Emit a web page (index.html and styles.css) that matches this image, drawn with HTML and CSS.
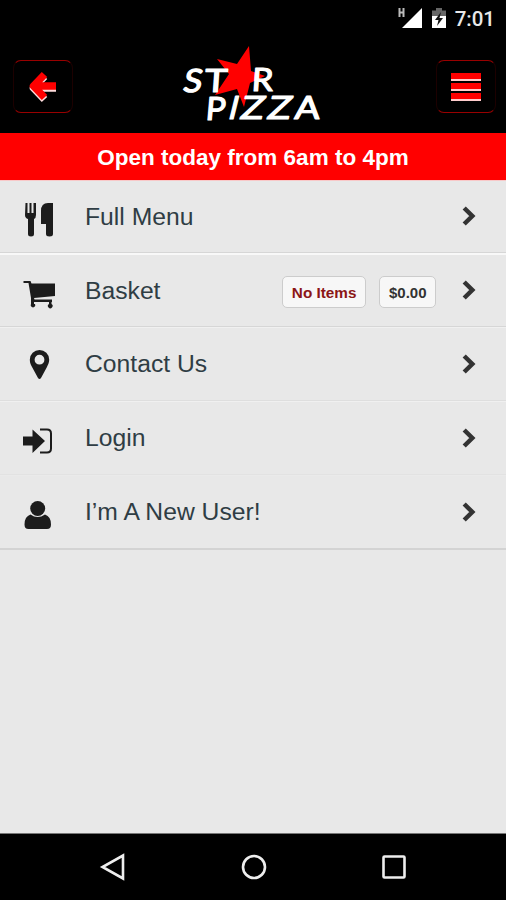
FILE: index.html
```html
<!DOCTYPE html>
<html lang="en">
<head>
<meta charset="utf-8">
<title>Star Pizza</title>
<link rel="stylesheet" href="styles.css">
</head>
<body>
<div class="status">
  <svg width="28" height="24" viewBox="0 0 28 24"><path d="M2.500 3v9M6.500 3v9M2.500 7.500h4" stroke="#bbb" stroke-width="2" fill="none"/><path d="M25 3v20H5z" fill="#fff"/></svg>
  <svg width="14" height="20" viewBox="0 0 14 20"><path d="M0 2.500h4V0h6v2.500h4V9H0z" fill="#666"/><path d="M0 8h14v12H0z" fill="#fff"/><path d="M9 4l-6 8h3.500L5 18l6-8H7.500z" fill="#111"/></svg>
  <span class="clock">7:01</span>
</div>
<header class="header">
  <button class="btn" aria-label="Back"><svg width="34" height="36" viewBox="0 0 34 36"><g fill="none" stroke-width="7.500" stroke-linejoin="round"><path d="M18.500 5.500L7.500 17l11 11.500M8 17h22" transform="translate(0 2)" stroke="#fdd"/><path d="M18.500 5.500L7.500 17l11 11.500M8 17h22" stroke="#f00"/></g></svg></button>
  <svg class="logo" width="144" height="80" viewBox="180 45 144 80">
    <path d="M249 46L251 71L265 76L250 83L244 107L237 89L215 95L229 74L217 59L237 64Z" fill="#f00"/>
    <g class="brand">
      <text transform="translate(182 92) skewX(-10) scale(1.080 1)">S</text>
      <text transform="translate(204 92) skewX(-4) scale(1.200 1)">T</text>
      <text transform="translate(251 91) skewX(-4) scale(1.080 1)">R</text>
      <text transform="translate(205 120) skewX(-5) scale(1.030 1)">P</text>
      <text transform="translate(227 119) skewX(-14)">I</text>
      <text transform="translate(239 119) skewX(-12) scale(1.220 1)">Z</text>
      <text transform="translate(266 119) skewX(-12) scale(1.220 1)">Z</text>
      <text transform="translate(294 119) skewX(-5) scale(1.160 1)">A</text>
    </g>
  </svg>
  <button class="btn" aria-label="Menu"><span class="bars"><i></i><i></i><i></i></span></button>
</header>
<div class="hours">Open today from 6am to 4pm</div>
<main class="menu">
  <a class="row">
    <svg class="icon" viewBox="0 0 32 36"><path d="M2.500 1h2v10h2V1h2v10h2V1H13v12q0 3-2 4v15q0 2.500-3 2.500T5 32V17q-3-1-3-4zM30 1v31q0 2.500-3.500 2.500T23 32V22h-5V9q0-8 7-8z"/></svg>
    <span class="label">Full Menu</span><svg class="chev" viewBox="0 0 14 20"><path d="M2.200 2L10.300 10L2.200 18"/></svg>
  </a>
  <a class="row">
    <svg class="icon" viewBox="0 0 32 36"><path d="M.5 5h7l1 2.500H32V20L11 22l.5 1.500H29V26H11v2h1a2.300 2.300 0 1 1-4 0v-6L5.500 7h-5zM26 25h2.500v3a2.300 2.300 0 1 1-2.500 0z"/></svg>
    <span class="label">Basket</span><span class="tag red">No Items</span><span class="tag">$0.00</span><svg class="chev" viewBox="0 0 14 20"><path d="M2.200 2L10.300 10L2.200 18"/></svg>
  </a>
  <a class="row">
    <svg class="icon" viewBox="0 0 32 36"><path fill-rule="evenodd" d="M16.500 1a9.700 9.700 0 0 1 9.700 9.700c0 3-1.200 5-2.500 7.800L18 29q-1.500 2-3 0L9.300 18.500C8 16 6.800 14 6.800 10.700A9.700 9.700 0 0 1 16.500 1zm0 4.800a4.900 4.900 0 1 0 0 9.800a4.900 4.900 0 0 0 0-9.800z"/></svg>
    <span class="label">Contact Us</span><svg class="chev" viewBox="0 0 14 20"><path d="M2.200 2L10.300 10L2.200 18"/></svg>
  </a>
  <a class="row">
    <svg class="icon" viewBox="0 0 32 36"><path d="M0 13.500h9.500V6.500L22 18L9.500 30V22.500H0z"/><path class="door" d="M17 6.500h7q4 0 4 4v15q0 4-4 4h-7"/></svg>
    <span class="label">Login</span><svg class="chev" viewBox="0 0 14 20"><path d="M2.200 2L10.300 10L2.200 18"/></svg>
  </a>
  <a class="row">
    <svg class="icon" viewBox="0 0 32 36"><circle cx="14.700" cy="11.500" r="7.500"/><path d="M7.500 17.500q7 5 14.500 0q6 2 6 10q0 4.500-4 4.500H5.500q-4 0-4-4.500q0-8 6-10z"/></svg>
    <span class="label">I’m A New User!</span><svg class="chev" viewBox="0 0 14 20"><path d="M2.200 2L10.300 10L2.200 18"/></svg>
  </a>
</main>
<nav class="nav">
  <svg viewBox="0 0 30 30"><path d="M25 3.500v23L4.500 15z"/></svg>
  <svg viewBox="0 0 30 30"><circle cx="15" cy="15" r="11"/></svg>
  <svg viewBox="0 0 30 30"><rect x="4.500" y="4.500" width="21" height="21" rx="1"/></svg>
</nav>
</body>
</html>
```
FILE: styles.css
```css
* { box-sizing: border-box; }
body {
  margin: 0;
  height: 900px;
  display: flex;
  flex-direction: column;
  background: #e8e8e8;
  font-family: "Liberation Sans", Arial, sans-serif;
  overflow: hidden;
}
.status {
  height: 40px;
  flex: none;
  background: #000;
  display: flex;
  justify-content: flex-end;
  align-items: flex-start;
  padding: 5px 11px 0 0;
}
.status svg:nth-child(2) { margin: 3px 9px 0 7px; }
.clock {
  color: #e8e8e8;
  font: 500 20.5px/28px Roboto, sans-serif;
}
.header {
  height: 93px;
  flex: none;
  background: #000;
  display: flex;
  justify-content: space-between;
  padding: 20px 10px 0 13px;
}
.btn {
  width: 60px;
  height: 53px;
  padding: 0;
  background: #000;
  border: 1px solid #1c0000;
  border-top-color: #900;
  border-bottom-color: #900;
  border-radius: 8px;
  display: flex;
  align-items: center;
  justify-content: center;
}
.btn svg { width: 34px; height: 36px; }
.logo { margin: -15px 5px 0 0; overflow: visible; }
.brand {
  fill: #fff;
  font: 400 32px Lato, sans-serif;
  stroke: #fff;
  stroke-width: 1.2px;
  stroke-linejoin: round;
}
.bars { display: grid; gap: 2px; }
.bars i {
  width: 30px;
  height: 8px;
  background: #f00;
  border-bottom: 2px solid #fcc;
}
.hours {
  height: 48px;
  flex: none;
  background: #f00;
  border-bottom: 1px solid #f8c8c8;
  color: #fff;
  text-align: center;
  font-weight: bold;
  font-size: 22.5px;
  line-height: 49px;
}
.menu { flex: 1; }
.row {
  height: 74px;
  display: flex;
  align-items: center;
  padding: 0 30px 0 23px;
  border-top: 1px solid #f0f0f0;
  border-bottom: 1px solid #d6d6d6;
}
.row:first-child { height: 72px; border-top: 0; }
.row:nth-child(2) { border-top: 2px solid #f8f8f8; }
.row:nth-child(3) { border-bottom-color: #dedede; }
.row:nth-child(4) { border-bottom-color: #e2e2e2; }
.row:last-child { height: 75px; border-top-color: #eaeaea; border-bottom: 2px solid #d3d3d3; }
.icon {
  width: 32px;
  height: 36px;
  margin-top: 6px;
  fill: #1c1c1c;
}
.door { fill: none; stroke: #1c1c1c; stroke-width: 2; }
.label {
  flex: 1;
  margin-left: 30px;
  color: #2f3d44;
  font-size: 24.7px;
  white-space: nowrap;
}
.chev { width: 14px; height: 20px; margin-left: 26px; }
.row:nth-child(-n+2) .chev { margin-top: -2px; }
.chev path { fill: none; stroke: #333; stroke-width: 4.5; }
.tag {
  height: 32px;
  margin: 3px 0 0 13px;
  padding: 0 8.5px;
  border: 1px solid #ccc;
  border-radius: 5px;
  background: #f7f7f7;
  color: #333;
  font-weight: bold;
  font-size: 15px;
  line-height: 31px;
}
.red { color: #8b1616; font-size: 15.3px; padding: 0 9px; }
.nav {
  height: 67px;
  flex: none;
  background: #000;
  border-top: 1px solid #777;
  display: flex;
  justify-content: space-between;
  align-items: center;
  padding: 0 97px 0 98px;
}
.nav svg {
  width: 30px;
  height: 30px;
  fill: none;
  stroke: #eee;
  stroke-width: 2.6;
}
```
